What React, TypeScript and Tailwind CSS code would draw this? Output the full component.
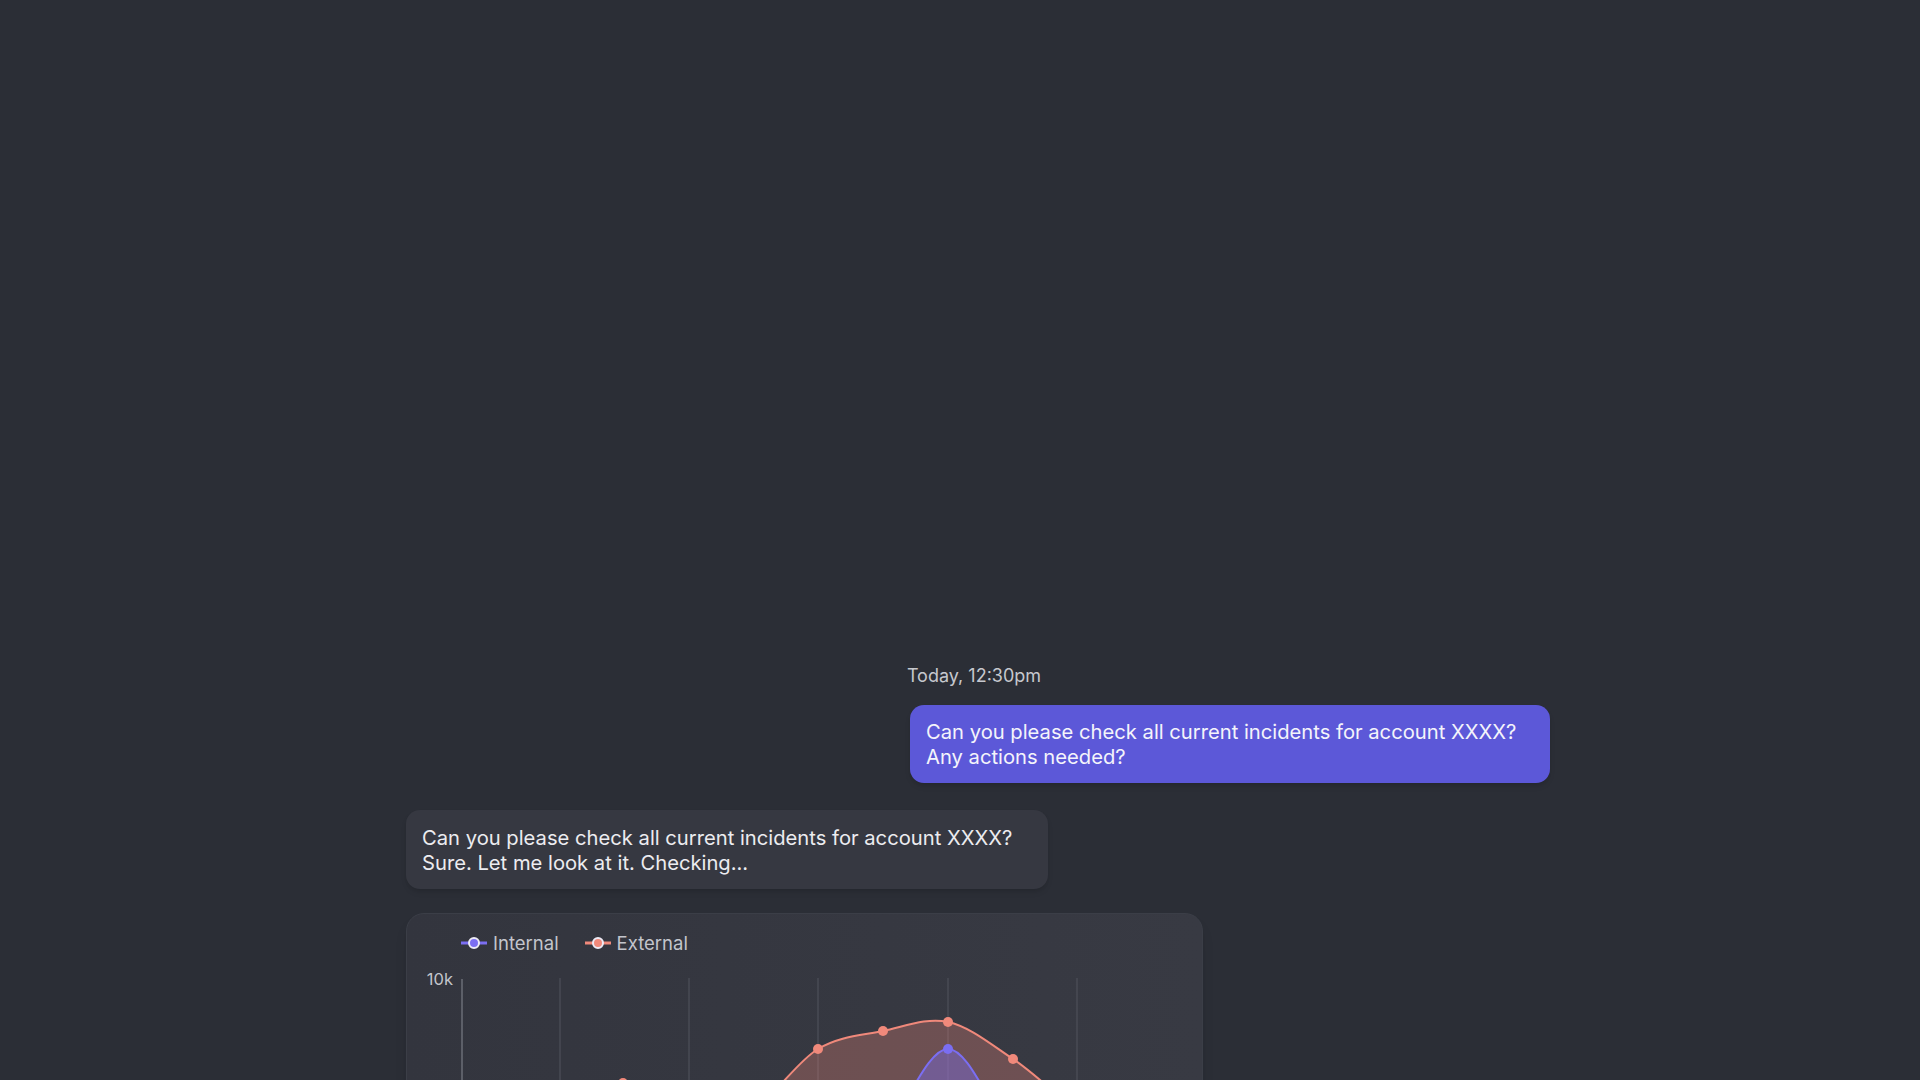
import React from "react";

const INTERNAL = "#7b6ef2";
const EXTERNAL = "#f0897b";

// chart coords: x relative to card left, y relative to card top + 50
const externalPts: [number, number][] = [
  [151, 150],
  [216, 120],
  [281, 150],
  [346, 145],
  [411, 86],
  [476, 68],
  [541, 59],
  [606, 96],
  [671, 145],
  [736, 165],
];

const internalPts: [number, number][] = [
  [346, 215],
  [411, 210],
  [476, 170],
  [541, 86],
  [606, 170],
  [671, 210],
  [736, 215],
];

function smoothPath(pts: [number, number][]) {
  let d = `M ${pts[0][0]} ${pts[0][1]}`;
  for (let i = 0; i < pts.length - 1; i++) {
    const p0 = pts[i - 1] ?? pts[i];
    const p1 = pts[i];
    const p2 = pts[i + 1];
    const p3 = pts[i + 2] ?? p2;
    const c1x = p1[0] + (p2[0] - p0[0]) / 6;
    const c1y = p1[1] + (p2[1] - p0[1]) / 6;
    const c2x = p2[0] - (p3[0] - p1[0]) / 6;
    const c2y = p2[1] - (p3[1] - p1[1]) / 6;
    d += ` C ${c1x} ${c1y} ${c2x} ${c2y} ${p2[0]} ${p2[1]}`;
  }
  return d;
}

function areaPath(pts: [number, number][]) {
  const last = pts[pts.length - 1];
  return `${smoothPath(pts)} L ${last[0]} 300 L ${pts[0][0]} 300 Z`;
}

function LegendIcon({ color }: { color: string }) {
  return (
    <svg width="26" height="14" viewBox="0 0 26 14" aria-hidden>
      <line x1="0" y1="7" x2="26" y2="7" stroke={color} strokeWidth="3" />
      <circle cx="13" cy="7" r="5" fill={color} stroke="#eceaf5" strokeWidth="2" />
    </svg>
  );
}

function IncidentChart() {
  const grid = [153, 282, 411, 541, 670];
  return (
    <div className="mt-6 h-[420px] w-[797px] rounded-[18px] border border-[#3b3e47] bg-gradient-to-r from-[#33353e] to-[#383a43] shadow-lg">
      <div className="flex items-center gap-[26px] pl-[54px] pt-[18px]">
        <div className="flex items-center gap-[6px]">
          <LegendIcon color={INTERNAL} />
          <span className="text-[18.5px] leading-[22px] text-[#c3c5cc]">Internal</span>
        </div>
        <div className="flex items-center gap-[6px]">
          <LegendIcon color={EXTERNAL} />
          <span className="text-[18.5px] leading-[22px] text-[#c3c5cc]">External</span>
        </div>
      </div>
      <svg width="795" height="300" viewBox="0 -9 795 300" className="block">
        <text x="46" y="22" textAnchor="end" fontSize="16.5" fill="#c3c5cc" fontFamily="Inter, sans-serif">
          10k
        </text>
        <line x1="55" y1="16" x2="55" y2="300" stroke="#6b6e77" strokeWidth="1.5" />
        {grid.map((x) => (
          <line key={x} x1={x} y1="15" x2={x} y2="300" stroke="#4d5059" strokeWidth="1.2" />
        ))}
        <path d={areaPath(externalPts)} fill="rgba(240,137,123,0.3)" />
        <path d={smoothPath(externalPts)} fill="none" stroke={EXTERNAL} strokeWidth="2" />
        <path d={areaPath(internalPts)} fill="rgba(123,110,242,0.4)" />
        <path d={smoothPath(internalPts)} fill="none" stroke={INTERNAL} strokeWidth="2" />
        {externalPts.map(([x, y]) => (
          <circle key={`e${x}`} cx={x} cy={y} r="5" fill={EXTERNAL} />
        ))}
        {internalPts.map(([x, y]) => (
          <circle key={`i${x}`} cx={x} cy={y} r="5" fill={INTERNAL} />
        ))}
      </svg>
    </div>
  );
}

export default function App() {
  return (
    <div className="h-screen overflow-hidden bg-[#2b2e36] font-['Inter',sans-serif]">
      <div className="ml-[406px] flex w-[1144px] flex-col pt-[665px]">
        <p className="pr-2 text-center text-[18px] leading-[22px] text-[#c6c8ce]">Today, 12:30pm</p>
        <div className="mt-[18px] w-[640px] self-end rounded-[14px] bg-[#5c58d8] px-4 py-3.5 text-[20.2px] leading-[25px] text-[#f4f4fb] shadow-md">
          Can you please check all current incidents for account XXXX?
          <br />
          Any actions needed?
        </div>
        <div className="mt-[27px] w-[642px] rounded-[14px] bg-[#363841] px-4 pb-[14px] pt-[15px] text-[20.2px] leading-[25px] text-[#ececf0] shadow-md">
          Can you please check all current incidents for account XXXX?
          <br />
          Sure. Let me look at it. Checking...
        </div>
        <IncidentChart />
      </div>
    </div>
  );
}
